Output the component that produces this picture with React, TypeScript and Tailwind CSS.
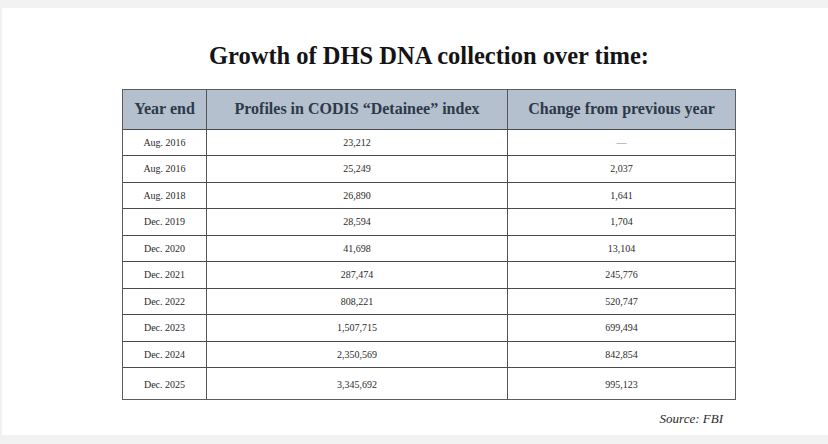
import React from "react";

const rows: [string, string, string][] = [
  ["Aug. 2016", "23,212", "—"],
  ["Aug. 2016", "25,249", "2,037"],
  ["Aug. 2018", "26,890", "1,641"],
  ["Dec. 2019", "28,594", "1,704"],
  ["Dec. 2020", "41,698", "13,104"],
  ["Dec. 2021", "287,474", "245,776"],
  ["Dec. 2022", "808,221", "520,747"],
  ["Dec. 2023", "1,507,715", "699,494"],
  ["Dec. 2024", "2,350,569", "842,854"],
  ["Dec. 2025", "3,345,692", "995,123"],
];

export default function App() {
  return (
    <div className="w-[828px] h-[444px] bg-[#f2f2f2] pt-[8px] pl-[2px] overflow-hidden">
      <div
        className="w-[826px] h-[427px] bg-white pt-[36px] pl-[120px]"
        style={{ fontFamily: '"Liberation Serif", "Times New Roman", serif' }}
      >
        <div className="w-[614px] flex flex-col">
          <h1 className="text-center text-[24.5px] leading-none font-bold text-[#141414]">
            Growth of DHS DNA collection over time:
          </h1>
          <div className="mt-[20px] border border-[#5c5c5c]">
            <div className="grid grid-cols-[83px_301px_228px] h-[39px] bg-[#b4c0cd] text-[16px] font-bold text-[#2d3949]">
              <div className="flex items-center justify-center">Year end</div>
              <div className="flex items-center justify-center border-l border-[#555]">
                Profiles in CODIS “Detainee” index
              </div>
              <div className="flex items-center justify-center border-l border-[#555]">
                Change from previous year
              </div>
            </div>
            {rows.map((r, i) => {
              const last = i === rows.length - 1;
              const cell = "flex items-center justify-center " + (last ? "pt-[3px]" : "");
              return (
                <div
                  key={i}
                  className={
                    "grid grid-cols-[83px_301px_228px] border-t border-[#4a4a4a] text-[10px] text-[#2a2a2a] " +
                    (last ? "h-[31.5px]" : "h-[26.5px]")
                  }
                >
                  <div className={cell}>{r[0]}</div>
                  <div className={cell + " border-l border-[#555]"}>{r[1]}</div>
                  <div
                    className={
                      cell + " border-l border-[#555] " + (r[2] === "—" ? "text-[#8a8a8a]" : "")
                    }
                  >
                    {r[2]}
                  </div>
                </div>
              );
            })}
          </div>
          <div className="mt-[12px] pr-[13px] text-right text-[13px] leading-none italic text-[#2a2a2a]">
            Source: FBI
          </div>
        </div>
      </div>
    </div>
  );
}
